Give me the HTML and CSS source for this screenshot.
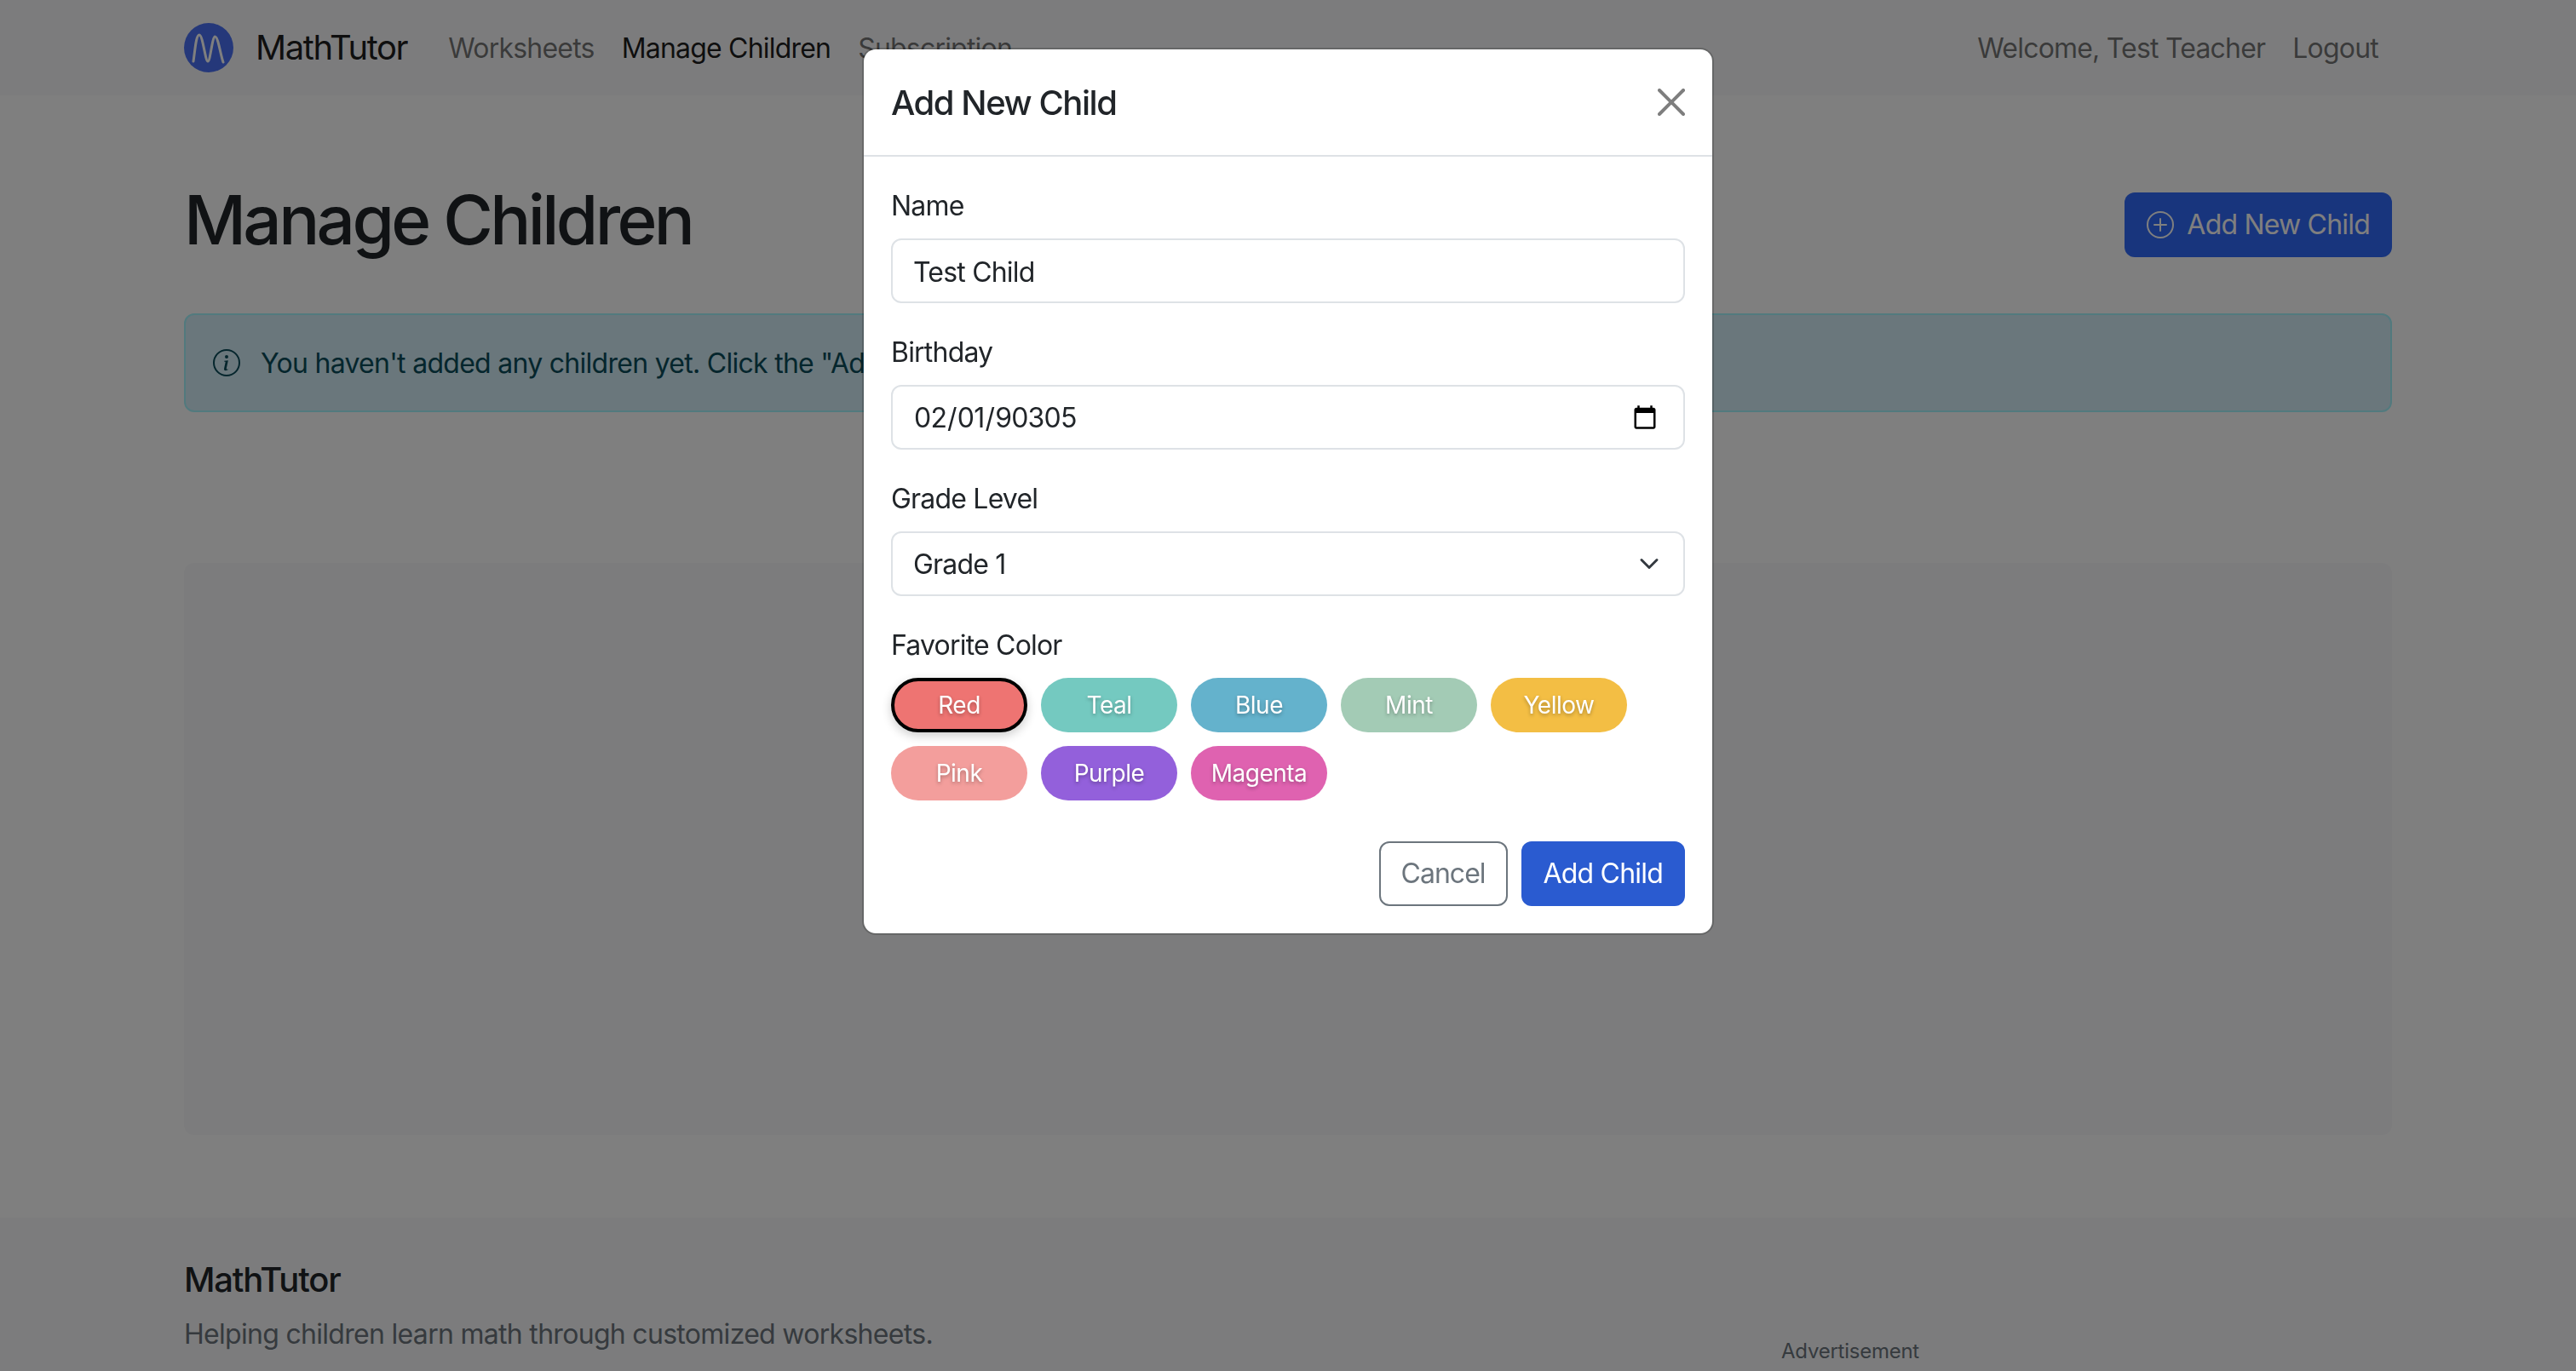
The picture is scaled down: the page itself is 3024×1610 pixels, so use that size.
FILE: index.html
```html
<!DOCTYPE html>
<html lang="en">
<head>
<meta charset="utf-8">
<title>Manage Children - MathTutor</title>
<link rel="stylesheet" href="styles.css">
</head>
<body>
<nav class="navbar">
  <div class="nav-inner">
    <a class="brand" href="#">
      <svg class="logo" viewBox="0 0 58 58" aria-hidden="true"><circle cx="29" cy="29" r="29" fill="#4a70f4"/><path d="M11 45C13 32 14 14 18 14C22 14 25 45 28 45C31 45 33 16 36.500 16C40 16 43 38 46 46" fill="none" stroke="#fff" stroke-width="3" stroke-linecap="round"/></svg>
      <span>MathTutor</span>
    </a>
    <ul class="nav-links">
      <li><a href="#">Worksheets</a></li>
      <li><a class="active" href="#">Manage Children</a></li>
      <li><a href="#">Subscription</a></li>
    </ul>
    <ul class="nav-links nav-right">
      <li><span>Welcome, Test Teacher</span></li>
      <li><a href="#">Logout</a></li>
    </ul>
  </div>
</nav>

<main class="container">
  <div class="page-head">
    <h1>Manage Children</h1>
    <button class="btn btn-primary-page" type="button">
      <svg class="icon" viewBox="0 0 16 16" fill="currentColor" aria-hidden="true"><path d="M8 15A7 7 0 1 1 8 1a7 7 0 0 1 0 14zm0 1A8 8 0 1 0 8 0a8 8 0 0 0 0 16z"/><path d="M8 4a.5.5 0 0 1 .5.5v3h3a.5.5 0 0 1 0 1h-3v3a.5.5 0 0 1-1 0v-3h-3a.5.5 0 0 1 0-1h3v-3A.5.5 0 0 1 8 4z"/></svg>
      Add New Child
    </button>
  </div>
  <div class="alert">
    <svg class="icon" viewBox="0 0 16 16" fill="currentColor" aria-hidden="true"><path d="M8 15A7 7 0 1 1 8 1a7 7 0 0 1 0 14zm0 1A8 8 0 1 0 8 0a8 8 0 0 0 0 16z"/><path d="m8.93 6.588-2.29.287-.082.38.45.083c.294.07.352.176.288.469l-.738 3.468c-.194.897.105 1.319.808 1.319.545 0 1.178-.252 1.465-.598l.088-.416c-.2.176-.492.246-.686.246-.275 0-.375-.193-.304-.533L8.93 6.588zM9 4.5a1 1 0 1 1-2 0 1 1 0 0 1 2 0z"/></svg>
    <span>You haven't added any children yet. Click the "Add New Child" button to get started.</span>
  </div>
  <div class="panel"></div>
</main>

<footer class="footer">
  <div class="footer-inner">
    <div class="footer-col">
      <h5>MathTutor</h5>
      <p>Helping children learn math through customized worksheets.</p>
    </div>
    <div class="footer-col footer-ad">
      <small>Advertisement</small>
    </div>
  </div>
</footer>

<div class="backdrop"></div>
<div class="modal-layer">
  <div class="modal" role="dialog" aria-label="Add New Child">
    <header class="modal-header">
      <h2>Add New Child</h2>
      <button class="close" type="button" aria-label="Close">
        <svg viewBox="0 0 16 16" fill="#000" aria-hidden="true"><path d="M.293.293a1 1 0 0 1 1.414 0L8 6.586 14.293.293a1 1 0 1 1 1.414 1.414L9.414 8l6.293 6.293a1 1 0 0 1-1.414 1.414L8 9.414l-6.293 6.293a1 1 0 0 1-1.414-1.414L6.586 8 .293 1.707a1 1 0 0 1 0-1.414z"/></svg>
      </button>
    </header>
    <form class="modal-body">
      <div class="field">
        <label for="name">Name</label>
        <input class="control" id="name" type="text" value="Test Child">
      </div>
      <div class="field">
        <label for="birthday">Birthday</label>
        <input class="control" id="birthday" type="date" value="90305-02-01">
      </div>
      <div class="field">
        <label for="grade">Grade Level</label>
        <div class="select-wrap">
          <select class="control" id="grade"><option>Grade 1</option></select>
          <svg class="chevron" viewBox="0 0 16 16" aria-hidden="true"><path d="m2 5 6 6 6-6" fill="none" stroke="#343a40" stroke-width="2" stroke-linecap="round" stroke-linejoin="round"/></svg>
        </div>
      </div>
      <div class="field field-colors">
        <label>Favorite Color</label>
        <div class="colors">
          <button type="button" class="pill selected red">Red</button>
          <button type="button" class="pill teal">Teal</button>
          <button type="button" class="pill blue">Blue</button>
          <button type="button" class="pill mint">Mint</button>
          <button type="button" class="pill yellow">Yellow</button>
          <button type="button" class="pill pink">Pink</button>
          <button type="button" class="pill purple">Purple</button>
          <button type="button" class="pill magenta">Magenta</button>
        </div>
      </div>
      <div class="actions">
        <button type="button" class="btn btn-cancel">Cancel</button>
        <button type="button" class="btn btn-submit">Add Child</button>
      </div>
    </form>
  </div>
</div>
</body>
</html>
```
FILE: styles.css
```css
* { box-sizing: border-box; }
html, body { height: 100%; overflow: hidden; }
body {
  margin: 0;
  background: #fff;
  color: #212529;
  font: 400 32px/48px Inter, "Liberation Sans", sans-serif;
  letter-spacing: -0.8px;
}
a { color: inherit; text-decoration: none; }
ul { list-style: none; margin: 0; padding: 0; }
h1, h2, h5, p { margin: 0; }

.navbar { background: #f8f9fa; height: 112px; display: flex; align-items: center; }
.nav-inner { width: 2640px; margin: 0 auto; padding: 0 24px; display: flex; align-items: center; }
.brand { display: flex; align-items: center; gap: 26px; font-size: 40px; letter-spacing: -1.4px; color: rgba(0,0,0,.9); margin-right: 32px; }
.logo { width: 58px; height: 58px; display: block; }
.nav-links { display: flex; }
.nav-links li { padding: 2px 16px 0; color: rgba(0,0,0,.55); }
.nav-links .active { color: rgba(0,0,0,.9); }
.nav-right { margin-left: auto; }

.container { width: 2640px; margin: 0 auto; padding: 96px 24px 0; }
.page-head { display: flex; justify-content: space-between; align-items: center; margin-bottom: 48px; }
h1 { font-size: 80px; line-height: 96px; font-weight: 500; letter-spacing: -3.65px; padding-top: 2px; margin-bottom: 14px; }
.btn {
  height: 76px; border-radius: 12px; border: 2px solid transparent; padding: 0 24px;
  font: 400 32px/48px Inter, "Liberation Sans", sans-serif;
  letter-spacing: -0.8px;
  display: inline-flex; align-items: center;
}
.icon { width: 32px; height: 32px; flex: none; }
.btn-primary-page { background: #306afa; color: #fff; gap: 15px; }
.alert {
  height: 116px; display: flex; align-items: center; gap: 24px; padding: 0 32px;
  background: #d4eef8; border: 2px solid #a4f4fc; border-radius: 12px; color: #0b4c5a;
}
.alert span { padding-top: 2px; letter-spacing: -0.72px; }
.panel { height: 672px; margin-top: 177px; background: #f8f9fa; border-radius: 12px; }

.footer { background: #f8f9fa; margin-top: 97px; padding-top: 49px; height: 400px; }
.footer-inner { width: 2640px; margin: 0 auto; padding: 0 24px; display: flex; gap: 48px; }
.footer-col { flex: 1; }
.footer h5 { font-size: 40px; line-height: 48px; font-weight: 500; letter-spacing: -1.2px; margin-bottom: 16px; }
.footer p { color: #6c757d; letter-spacing: -0.7px; }
.footer-ad { text-align: center; padding-top: 90px; }
.footer-ad small { font-size: 24px; line-height: 36px; letter-spacing: -0.25px; color: #6c757d; display: block; }

.backdrop { position: fixed; inset: 0; background: rgba(0,0,0,.5); }
.modal-layer { position: fixed; inset: 0; display: flex; justify-content: center; align-items: flex-start; padding-top: 56px; }
.modal {
  width: 1000px; background: #fff; border: 2px solid rgba(0,0,0,.175); border-radius: 16px;
  background-clip: padding-box;
}
.modal-header { height: 126px; padding: 0 32px; display: flex; align-items: center; justify-content: space-between; border-bottom: 2px solid #dee2e6; }
.modal-header h2 { font-size: 40px; line-height: 60px; font-weight: 500; letter-spacing: -1.45px; padding-top: 2px; }
.close { width: 32px; height: 32px; padding: 0; border: 0; background: none; opacity: .5; }
.close svg { width: 32px; height: 32px; display: block; }

.modal-body { padding: 32px 32px 32px; }
.field { margin-bottom: 32px; }
.field-colors { margin-bottom: 48px; }
label { display: block; padding-top: 2px; margin-bottom: 14px; }
.control {
  display: block; width: 100%; height: 76px; padding: 2px 24px 0; background: #fff; color: #212529;
  border: 2px solid #dee2e6; border-radius: 12px; appearance: none;
  font: 400 32px/48px Inter, "Liberation Sans", sans-serif;
  letter-spacing: -0.8px;
}
.control::-webkit-calendar-picker-indicator { margin-right: 3px; }
.select-wrap { position: relative; }
.chevron { position: absolute; right: 30px; top: 26px; width: 24px; height: 24px; pointer-events: none; }

.colors { display: flex; flex-wrap: wrap; gap: 16px; }
.pill {
  width: 160px; height: 64px; border-radius: 32px; border: 4px solid transparent; padding: 0;
  color: #fff; font: 400 28px/40px Inter, "Liberation Sans", sans-serif;
  letter-spacing: -0.5px;
  text-shadow: 0 2px 4px rgba(0,0,0,.3);
}
.pill.selected { border-color: #000; box-shadow: 0 4px 12px rgba(0,0,0,.2); }
.red { background: #ee7472; }
.teal { background: #74c9c0; }
.blue { background: #64b2cc; }
.mint { background: #a3cbb5; }
.yellow { background: #f3be44; }
.pink { background: #f39e9c; }
.purple { background: #9360db; }
.magenta { background: #df62b0; }

.actions { display: flex; justify-content: flex-end; gap: 16px; }
.btn-cancel { background: #fff; border-color: #6c757d; color: #6c757d; letter-spacing: -1px; }
.btn-submit { background: #2a5bd0; color: #fff; }
```
